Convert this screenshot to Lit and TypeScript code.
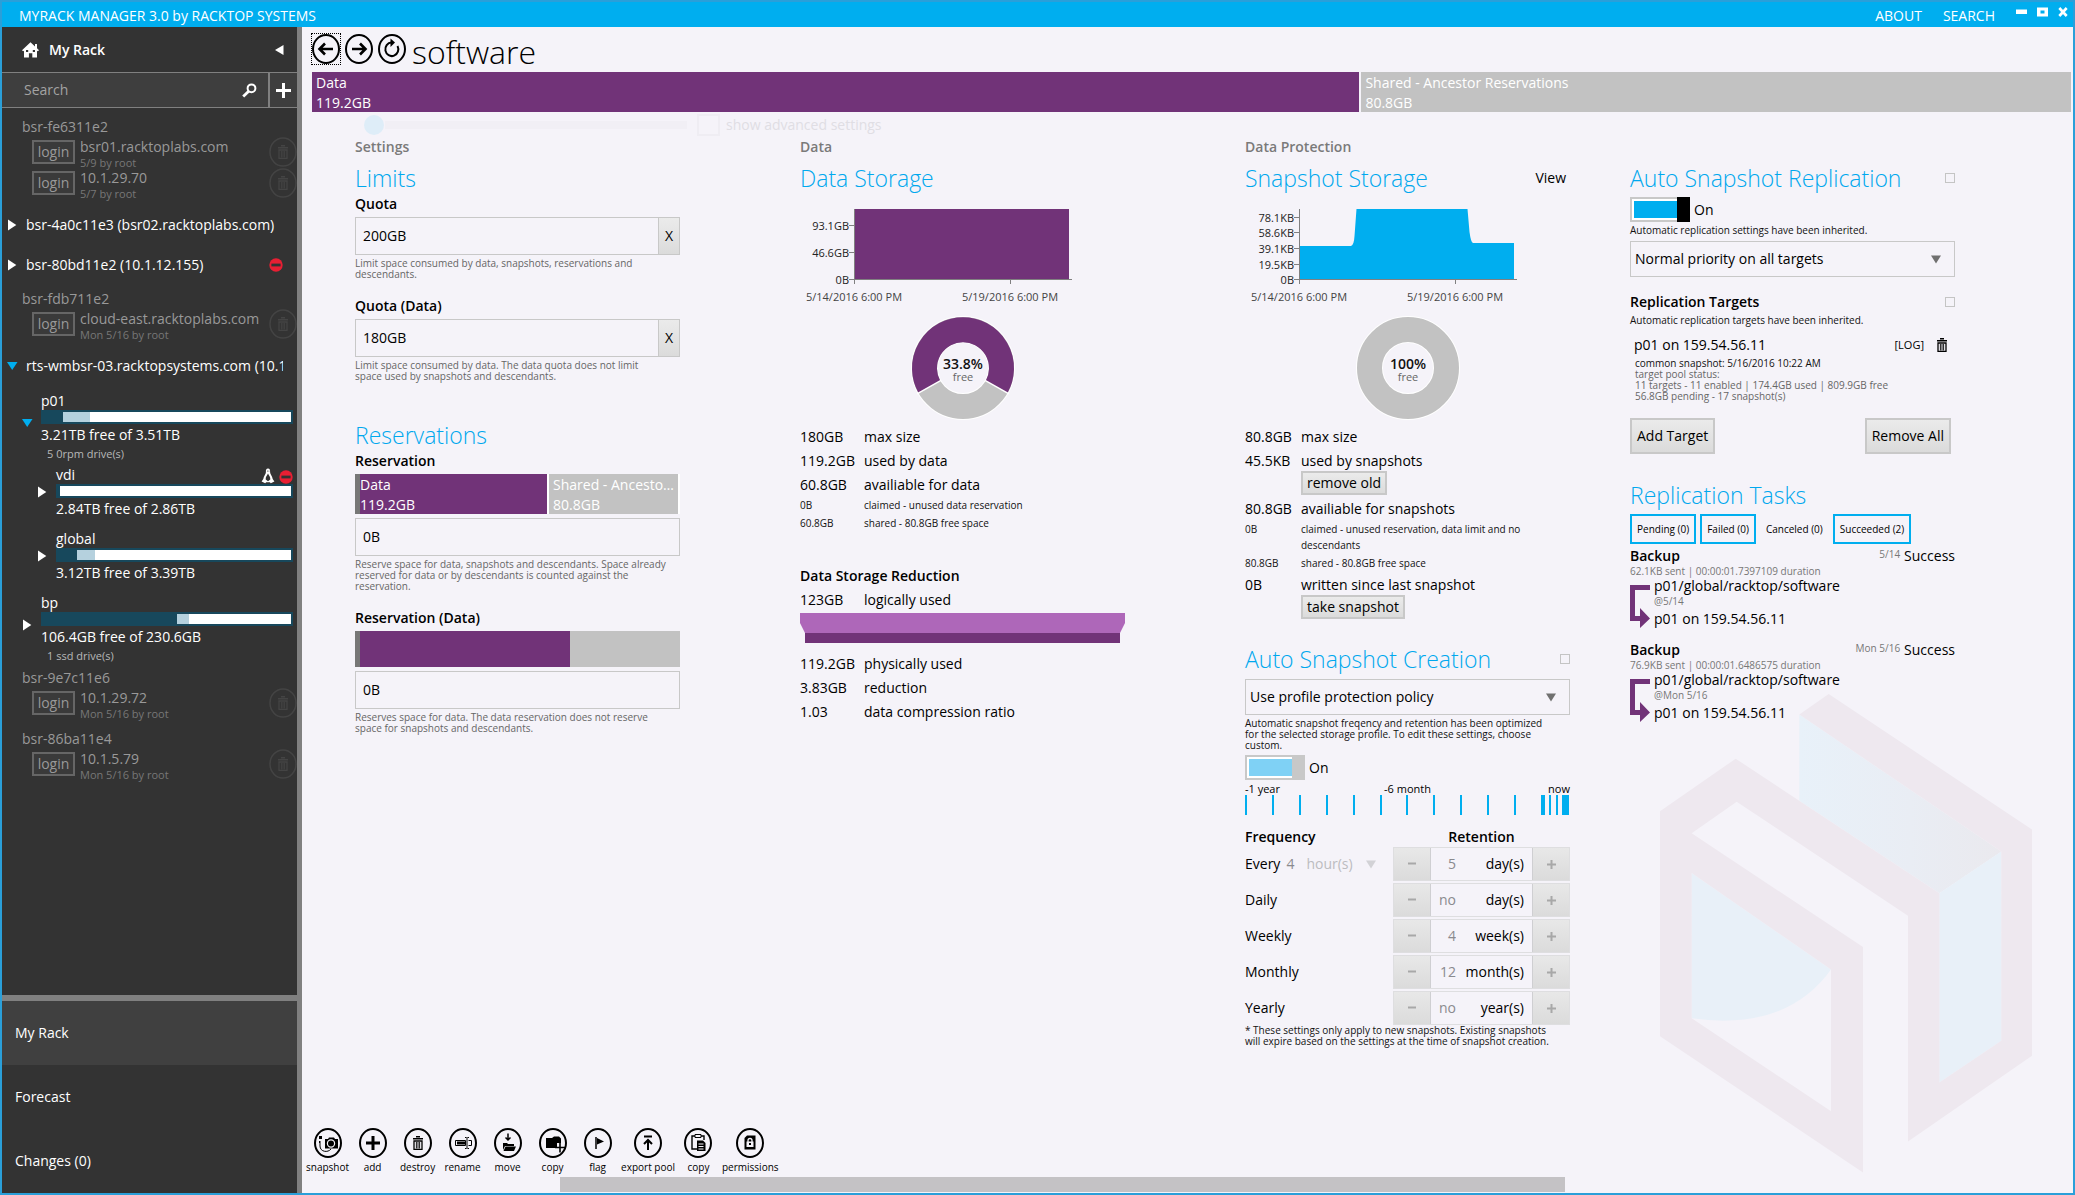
import { LitElement, html, css, svg, nothing } from "lit";
import { customElement, property } from "lit/decorators.js";

const base = css`
  *, *::before, *::after { box-sizing: border-box; }
  h1, h2, h3, p, dl, dd, dt, ul, ol { margin: 0; padding: 0; }
  ul, ol { list-style: none; }
  button, input, select { font: inherit; color: inherit; margin: 0; border-radius: 0; }
  button { cursor: pointer; }
  svg { display: block; flex: none; }
  a { color: inherit; text-decoration: none; }
`;

const trash = svg`
  <path d="M4 0.7h4M1 2.8h10" stroke="currentColor" stroke-width="1.4" fill="none"/>
  <path d="M2 5h8v8.3H2z" fill="none" stroke="currentColor" stroke-width="1.3"/>
  <path d="M4.4 6v6.5M6 6v6.5M7.6 6v6.5" stroke="currentColor" stroke-width="0.9"/>`;

/* ------------------------------------------------------------ sidebar */

interface Login { host: string; when: string; }
interface Volume {
  name: string; used: number; reserved: number; free: string;
  drives?: string; open?: boolean; linux?: boolean; blocked?: boolean; children?: Volume[];
}
interface Host { name: string; logins?: Login[]; open?: boolean; blocked?: boolean; volumes?: Volume[]; }

const HOSTS: Host[] = [
  { name: "bsr-fe6311e2", logins: [
    { host: "bsr01.racktoplabs.com", when: "5/9 by root" },
    { host: "10.1.29.70", when: "5/7 by root" } ] },
  { name: "bsr-4a0c11e3 (bsr02.racktoplabs.com)" },
  { name: "bsr-80bd11e2 (10.1.12.155)", blocked: true },
  { name: "bsr-fdb711e2", logins: [{ host: "cloud-east.racktoplabs.com", when: "Mon 5/16 by root" }] },
  { name: "rts-wmbsr-03.racktopsystems.com (10.1", open: true, volumes: [
    { name: "p01", used: 8, reserved: 11, free: "3.21TB free of 3.51TB", drives: "5 0rpm drive(s)", open: true, children: [
      { name: "vdi", used: 1, reserved: 0, free: "2.84TB free of 2.86TB", linux: true, blocked: true },
      { name: "global", used: 8, reserved: 8, free: "3.12TB free of 3.39TB" } ] },
    { name: "bp", used: 54, reserved: 5, free: "106.4GB free of 230.6GB", drives: "1 ssd drive(s)" } ] },
  { name: "bsr-9e7c11e6", logins: [{ host: "10.1.29.72", when: "Mon 5/16 by root" }] },
  { name: "bsr-86ba11e4", logins: [{ host: "10.1.5.79", when: "Mon 5/16 by root" }] },
];

@customElement("rack-sidebar")
export class RackSidebar extends LitElement {
  static styles = [base, css`
    :host { display: flex; flex-direction: column; background: #333; color: #fff; border-right: 5px solid #808080; min-width: 0; }
    .head { display: flex; align-items: center; height: 45px; padding: 0 13px 0 20px; gap: 10px; font-weight: 600; }
    .head span { flex: 1; }
    .find { display: flex; height: 36px; border: solid #808080; border-width: 1px 0; background: #3e3e3e; }
    .find input { flex: 1; min-width: 0; border: 0; background: none; padding: 0 0 0 22px; outline: none; }
    .find input::placeholder { color: #a3a3a3; opacity: 1; }
    .icon { display: grid; place-items: center; background: none; border: 0; padding: 0; color: #fff; }
    .mag { width: 37px; }
    .plus { width: 29px; border-left: 2px solid #808080; }
    .tree { flex: 1; padding-top: 5px; overflow: hidden; }
    .off { padding: 4px 0 6px 20px; color: #999; }
    .login { display: flex; height: 31px; padding-left: 10px; gap: 5px; }
    .login button.in { width: 43px; height: 24px; margin-top: 3px; padding: 0; border: 2px solid #666; background: #3a3a3a; line-height: 20px; flex: none; }
    .who { flex: 1; min-width: 0; white-space: nowrap; }
    .when { font-size: 11px; line-height: 11px; color: #777; }
    .del { width: 28px; height: 30px; padding: 0; border: 0; background: none; color: #444; flex: none; }
    .on { display: flex; align-items: center; height: 40px; padding: 0 14px 0 5px; }
    .name { flex: 1; min-width: 0; white-space: nowrap; overflow: hidden; }
    .tw { display: grid; place-items: center start; width: 13px; height: 14px; margin-right: 6px; padding: 0; border: 0; background: none; flex: none; }
    .pools { padding: 2px 4px 0 20px; }
    .vol { display: grid; grid-template-columns: 13px 1fr; column-gap: 6px; margin-top: 10px; }
    .vol:first-child { margin-top: 4px; }
    .vol .tw { margin: 24px 0 0; }
    .kids { padding-left: 15px; }
    .kids .tw { margin-top: 19px; }
    .vname { display: flex; align-items: end; gap: 4px; height: 18px; line-height: 18px; }
    .vname span { flex: 1; }
    .bar { display: flex; height: 14px; border: 2px solid #17485c; background: #fff; }
    .used { background: #17485c; }
    .res { background: #b5d1de; }
    .free { line-height: 22px; white-space: nowrap; }
    .drives { font-size: 11px; line-height: 16px; color: #b8b8b8; padding-left: 6px; }
    .tabs { border-top: 6px solid #808080; }
    .tabs a { display: flex; align-items: center; height: 64px; padding-left: 13px; }
    .tabs a.cur { background: #404040; }
  `];

  private twisty(open?: boolean) {
    return html`<button class="tw" aria-label=${open ? "Collapse" : "Expand"}>
      <svg width="11" height="12" viewBox="0 0 11 12">${open
        ? svg`<path d="M0 2h10.5L5.2 10z" fill="#00aeef"/>`
        : svg`<path d="M1 0.5v11L9.300 6z" fill="#fff"/>`}</svg></button>`;
  }

  private stop() {
    return html`<svg width="14" height="14" viewBox="0 0 14 14"><circle cx="7" cy="7" r="6.7" fill="#e81f33"/><path d="M2.400 5.600h9.200v2.800H2.400z" fill="#333"/></svg>`;
  }

  private volume(v: Volume): unknown {
    return html`
      <li class="vol">
        ${this.twisty(v.open)}
        <div>
          <div class="vname"><span>${v.name}</span>
            ${v.linux ? html`<svg width="14" height="16" viewBox="0 0 14 16"><path d="M7 0.6C5.200.6 4.800 2 4.900 4.200 4.900 6 2.700 8 2.300 11l-1.700 2.600 3.600 1.700 1-1.100h3.600l1 1.100 3.600-1.700-1.700-2.600C11.300 8 9.100 6 9.100 4.200 9.200 2 8.800.6 7 .6z" fill="#fff"/><path d="M7 5.400c-.9 2-2.600 3.600-2.300 6L7 13.200l2.300-1.800C9.600 9 7.900 7.400 7 5.400z" fill="#333"/><path d="M6 3.100h.8M7.500 3.100h.8" stroke="#333" stroke-width=".9"/></svg>` : nothing}
            ${v.blocked ? this.stop() : nothing}</div>
          <div class="bar"><div class="used" style="width:${v.used}%"></div><div class="res" style="width:${v.reserved}%"></div></div>
          <div class="free">${v.free}</div>
          ${v.drives ? html`<div class="drives">${v.drives}</div>` : nothing}
        </div>
      </li>
      ${v.children ? html`<li><ul class="kids">${v.children.map((c) => this.volume(c))}</ul></li>` : nothing}`;
  }

  render() {
    return html`
      <div class="head">
        <svg width="17" height="16" viewBox="0 0 17 16"><path d="M8.500.3 13 4.400V2h2v4.200l2 2-1.200 1L15 8.700V15.500h-4.700v-4.300H6.900v4.300H2V8.700l-.9.5L0 8.200z" fill="#fff"/><path d="M4 8h2.200v2H4zM10.800 8H13v2h-2.200z" fill="#333"/></svg>
        <span>My Rack</span>
        <button class="icon" aria-label="Collapse panel"><svg width="9" height="10" viewBox="0 0 9 10"><path d="M8.500 0v10L0 5z" fill="#fff"/></svg></button>
      </div>
      <div class="find">
        <input type="text" placeholder="Search" aria-label="Search">
        <button class="icon mag" aria-label="Find"><svg width="15" height="15" viewBox="0 0 15 15"><circle cx="9.500" cy="5.300" r="3.900" fill="none" stroke="#fff" stroke-width="2"/><path d="M6.700 8.200 1.200 13.500" stroke="#fff" stroke-width="2.800"/></svg></button>
        <button class="icon plus" aria-label="Add server"><svg width="15" height="15" viewBox="0 0 15 15"><path d="M7.500 0v15M0 7.500h15" stroke="#fff" stroke-width="3"/></svg></button>
      </div>
      <div class="tree">
        ${HOSTS.map((h) => h.logins
          ? html`<div class="off">${h.name}${h.logins.map((l) => html`
              <div class="login"><button class="in">login</button>
                <div class="who">${l.host}<div class="when">${l.when}</div></div>
                <button class="del" aria-label="Forget ${l.host}"><svg width="28" height="30" viewBox="0 0 28 30"><ellipse cx="14" cy="15" rx="13" ry="14" fill="none" stroke="currentColor" stroke-width="1.500"/><g transform="translate(8 8)">${trash}</g></svg></button>
              </div>`)}</div>`
          : html`<div class="on">${this.twisty(h.open)}<span class="name">${h.name}</span>${h.blocked ? this.stop() : nothing}</div>
              ${h.volumes ? html`<ul class="pools">${h.volumes.map((v) => this.volume(v))}</ul>` : nothing}`)}
      </div>
      <nav class="tabs"><a class="cur" href="#rack">My Rack</a><a href="#forecast">Forecast</a><a href="#changes">Changes (0)</a></nav>`;
  }
}

/* ------------------------------------------------------------- charts */

@customElement("history-chart")
export class HistoryChart extends LitElement {
  @property({ attribute: false }) ticks: [number, string][] = [];
  @property() shape = "";
  @property() color = "#713378";
  static styles = [base, css`
    :host { display: block; }
    text { font-size: 11px; fill: #222; }
    .x { fill: #444; }
    .axis { stroke: #808080; fill: none; shape-rendering: crispEdges; }
  `];
  render() {
    return html`<svg width="325" height="110" viewBox="0 0 325 110" role="img" aria-label="Usage history">
      <path d=${this.shape} fill=${this.color}/>
      <path class="axis" d="M54.500 9v75M49 79.500h223M210.500 79v5"/>
      ${this.ticks.map(([y, t]) => svg`<path class="axis" d="M49 ${y}.5h5"/><text x="49" y=${y + 5} text-anchor="end">${t}</text>`)}
      <text class="x" x="54" y="101" text-anchor="middle">5/14/2016 6:00 PM</text>
      <text class="x" x="210" y="101" text-anchor="middle">5/19/2016 6:00 PM</text>
    </svg>`;
  }
}

@customElement("free-donut")
export class FreeDonut extends LitElement {
  @property() label = "";
  @property({ type: Boolean }) split = false;
  static styles = [base, css`
    :host { display: flex; justify-content: center; }
    .big { font-size: 14px; font-weight: 600; fill: #111; }
    .sub { font-size: 11px; fill: #666; }
  `];
  render() {
    return html`<svg width="104" height="104" viewBox="0 0 104 104" role="img" aria-label="${this.label} free">
      <circle cx="52" cy="52" r="38.500" fill="none" stroke="#fff" stroke-width="27"/>
      <circle cx="52" cy="52" r="38.500" fill="none" stroke="#c2c2c2" stroke-width="25"/>
      ${this.split ? svg`
        <path d="M18.400 71 A38.500 38.500 0 1 1 85.600 71" fill="none" stroke="#713378" stroke-width="25"/>
        <path d="M30 64.400 6 77.800M74 64.400 98 77.800" stroke="#fff" stroke-width="1.500"/>` : nothing}
      <text class="big" x="52" y="53" text-anchor="middle">${this.label}</text>
      <text class="sub" x="52" y="65" text-anchor="middle">free</text>
    </svg>`;
  }
}

/* -------------------------------------------------------------- panels */

const RETENTION = [
  ["Daily", "no", "day(s)"], ["Weekly", "4", "week(s)"], ["Monthly", "12", "month(s)"], ["Yearly", "no", "year(s)"],
];

const TASKS = [
  { when: "5/14", sent: "62.1KB sent | 00:00:01.7397109 duration", at: "@5/14" },
  { when: "Mon 5/16", sent: "76.9KB sent | 00:00:01.6486575 duration", at: "@Mon 5/16" },
];

@customElement("dataset-panels")
export class DatasetPanels extends LitElement {
  static styles = [base, css`
    :host { display: grid; grid-template-columns: 325fr 325fr 710fr; column-gap: 120px; align-items: start; padding: 0 118px 0 53px; }
    section { min-width: 0; }
    .pair { display: grid; grid-template-columns: 1fr 1fr; column-gap: 60px; align-items: start; }
    .cap { color: #7a7a7a; font-weight: 600; font-size: 14px; line-height: 20px; margin-bottom: 5px; }
    h2 { font-size: 23px; font-weight: 300; line-height: 32px; color: #00a8ee; white-space: nowrap; }
    h3, .lbl { display: block; font-size: 14px; font-weight: 600; line-height: 20px; }
    .row { display: flex; align-items: center; justify-content: space-between; }
    .help { font-size: 10px; line-height: 11px; margin-top: 3px; padding-bottom: 1px; color: #666; }
    .help.dark { color: #111; }
    .gap { margin-top: 15px; }
    .big { margin-top: 36px; }
    .field { display: flex; height: 38px; margin-top: 3px; border: 1px solid #c8c8c8; }
    .field input { flex: 1; min-width: 0; border: 0; background: none; padding: 0 7px; outline: none; }
    .field button { width: 21px; border: 0; border-left: 1px solid #c8c8c8; padding: 0; background: linear-gradient(#ebebeb, #dbdbdb); }
    .after { margin-top: 4px; }
    .split { display: flex; gap: 2px; height: 40px; margin-top: 3px; padding-right: 2px; background: #fff; color: #fff; }
    .seg { min-width: 0; padding: 1px 4px; background: #c2c2c2; white-space: nowrap; overflow: hidden; text-overflow: ellipsis; }
    .seg div { overflow: hidden; text-overflow: ellipsis; line-height: 20px; }
    .data { background: #713378; }
    .handle { border-left: 5px solid #777; padding-left: 0; }
    .plain { height: 36px; gap: 0; padding: 0; }
    .chart { margin-top: 6px; }
    .donut { margin: 6px 0 5px; }
    dl { display: grid; grid-template-columns: 64px 1fr; }
    .snap { grid-template-columns: 56px 1fr; }
    dt, dd { padding: 2px 0; white-space: nowrap; }
    .sm { font-size: 10px; line-height: 16px; padding: 0 0 2px; color: #111; }
    .btn { display: block; height: 24px; padding: 0 4px; border: 2px solid #c8c8c8; background: linear-gradient(#ebebeb, #dbdbdb); line-height: 20px; }
    .tall { height: 36px; line-height: 32px; padding: 0 5px; }
    .reduce { width: 100%; height: 30px; margin: 1px 0 9px; }
    .mid { margin: 33px 0 2px; }
    .create { margin-top: 22px; }
    .link { border: 0; background: none; padding: 0; margin-right: 4px; }
    .tick { appearance: none; width: 10px; height: 10px; border: 1px solid #c4c4c4; background: none; flex: none; }
    .pick { display: grid; align-items: center; height: 36px; margin-top: 4px; border: 1px solid #c8c8c8; }
    .pick > * { grid-area: 1 / 1; }
    .pick select { appearance: none; height: 34px; width: 100%; border: 0; padding: 0 4px; background: none; outline: none; }
    .pick svg { justify-self: end; margin-right: 13px; pointer-events: none; }
    .switch { display: flex; align-items: center; gap: 4px; height: 25px; margin-top: 3px; }
    .switch input { appearance: none; width: 60px; height: 25px;
      background: linear-gradient(#000, #000) right / 13px 100% no-repeat, linear-gradient(#00aeef, #00aeef) 4px 4px / 43px 17px no-repeat,
        linear-gradient(#fff, #fff) 2px 2px / 56px 21px no-repeat, #c8c8c8; }
    .switch input:disabled { background: linear-gradient(#c8c8c8, #c8c8c8) right / 13px 100% no-repeat, linear-gradient(#7fd1f5, #7fd1f5) 4px 4px / 43px 17px no-repeat,
        linear-gradient(#fff, #fff) 2px 2px / 56px 21px no-repeat, #c8c8c8; }
    .scale { display: grid; grid-template-columns: 1fr auto 1fr; font-size: 11px; line-height: 12px; margin-top: 3px; }
    .scale span:last-child { text-align: right; }
    .line { width: 100%; height: 20px; }
    table { width: 100%; margin-top: 12px; border-collapse: collapse; }
    th, td { padding: 0; text-align: left; font-weight: 400; }
    thead th { font-weight: 600; line-height: 20px; }
    thead th + th { width: 177px; text-align: center; }
    tbody th, tbody td { height: 36px; padding-bottom: 2px; }
    tbody tr:last-child > * { height: 34px; padding-bottom: 0; }
    .step { display: grid; grid-template-columns: 36px 1fr 36px; height: 34px; border: 1px solid #dedee0; }
    .step button { border: 0; padding: 0; display: grid; place-items: center; background: linear-gradient(#e8e8e8, #dbdbdb); }
    .amount { display: flex; align-items: center; justify-content: space-between; border: solid #cfcfd2; border-width: 0 1px; padding-right: 8px; }
    .amount input { width: 25px; border: 0; padding: 0; background: none; text-align: right; color: #8a8a8e; }
    .every { display: flex; align-items: center; }
    .every input { width: 20px; border: 0; padding: 0; margin: 0 0 0 6px; background: none; color: #8a8a8e; text-align: left; }
    .every select { appearance: none; border: 0; padding: 0; background: none; color: #bcbcc0; opacity: 1; width: 60px; }
    .notes { margin: 0; }
    .target { display: grid; grid-template-columns: 1fr auto 12px; align-items: center; column-gap: 12px; padding: 8px 7px 0 4px; }
    .log { font-size: 11px; }
    .bin { border: 0; padding: 0; background: none; width: 12px; }
    .status { padding-left: 5px; }
    .status b { font-weight: 400; color: #111; }
    .acts { padding-right: 4px; margin-top: 15px; }
    .tasks { margin-top: 25px; }
    .filters { display: flex; gap: 4px; margin-top: 3px; margin-bottom: 2px; }
    .filters button { height: 30px; padding: 0 5px; border: 2px solid #00aeef; background: none; font-size: 10px; white-space: nowrap; }
    .filters .idle { border-color: transparent; padding: 0 4px; }
    .task { margin-bottom: 11px; }
    .task .row { gap: 4px; }
    .task .row h3 { flex: 1; }
    .task small { font-size: 10px; color: #777; line-height: 16px; align-self: start; }
    .task .help { margin: 0; padding: 0; color: #777; line-height: 10px; }
    .route { display: grid; grid-template-columns: 20px 1fr; column-gap: 4px; }
    .route svg { margin-top: 9px; }
    .last { margin-top: 3px; }
  `];

  private arrow(color = "#707070") {
    return html`<svg width="10" height="9" viewBox="0 0 10 9"><path d="M0 0.500h10L5 8.500z" fill=${color}/></svg>`;
  }

  private stepper(name: string, value: string, unit: string) {
    return html`<div class="step">
      <button aria-label="Less, ${name}"><svg width="8" height="8" viewBox="0 0 8 8"><path d="M0 3.500h8" stroke="#a8a8a8" stroke-width="2"/></svg></button>
      <div class="amount"><input type="text" .value=${value} aria-label="${name} retention" disabled><span>${unit}</span></div>
      <button aria-label="More, ${name}"><svg width="9" height="9" viewBox="0 0 9 9"><path d="M0 4.500h9M4.500 0v9" stroke="#a8a8a8" stroke-width="2"/></svg></button>
    </div>`;
  }

  private settings() {
    return html`<section>
      <div class="cap">Settings</div>
      <h2>Limits</h2>
      <label class="lbl" for="quota">Quota</label>
      <div class="field"><input id="quota" type="text" value="200GB"><button aria-label="Clear quota">X</button></div>
      <p class="help">Limit space consumed by data, snapshots, reservations and<br>descendants.</p>
      <label class="lbl gap" for="dquota">Quota (Data)</label>
      <div class="field"><input id="dquota" type="text" value="180GB"><button aria-label="Clear data quota">X</button></div>
      <p class="help">Limit space consumed by data. The data quota does not limit<br>space used by snapshots and descendants.</p>
      <h2 class="big">Reservations</h2>
      <label class="lbl" for="res">Reservation</label>
      <div class="split">
        <div class="seg data handle" style="flex:60.2 1 0"><div>Data</div><div>119.2GB</div></div>
        <div class="seg" style="flex:39.8 1 0"><div>Shared - Ancestor Reservations</div><div>80.8GB</div></div>
      </div>
      <div class="field after"><input id="res" type="text" value="0B"></div>
      <p class="help">Reserve space for data, snapshots and descendants. Space already<br>reserved for data or by descendants is counted against the<br>reservation.</p>
      <label class="lbl gap" for="dres">Reservation (Data)</label>
      <div class="split plain">
        <div class="seg data handle" style="flex:66.9 1 0"></div><div class="seg" style="flex:33.1 1 0"></div>
      </div>
      <div class="field after"><input id="dres" type="text" value="0B"></div>
      <p class="help">Reserves space for data. The data reservation does not reserve<br>space for snapshots and descendants.</p>
    </section>`;
  }

  private data() {
    return html`<section>
      <div class="cap">Data</div>
      <h2>Data Storage</h2>
      <history-chart class="chart" shape="M55 9h214v70H55z" .ticks=${[[25, "93.1GB"], [52, "46.6GB"], [79, "0B"]]}></history-chart>
      <free-donut class="donut" label="33.8%" split></free-donut>
      <dl>
        <dt>180GB</dt><dd>max size</dd>
        <dt>119.2GB</dt><dd>used by data</dd>
        <dt>60.8GB</dt><dd>availiable for data</dd>
        <dt class="sm">0B</dt><dd class="sm">claimed - unused data reservation</dd>
        <dt class="sm">60.8GB</dt><dd class="sm">shared - 80.8GB free space</dd>
      </dl>
      <h3 class="mid">Data Storage Reduction</h3>
      <dl><dt>123GB</dt><dd>logically used</dd></dl>
      <svg class="reduce" viewBox="0 0 325 30" preserveAspectRatio="none"><path d="M0 0h325v10l-5 10H5L0 10z" fill="#ae67b9"/><path d="M5 20h315v10H5z" fill="#713378"/></svg>
      <dl>
        <dt>119.2GB</dt><dd>physically used</dd>
        <dt>3.83GB</dt><dd>reduction</dd>
        <dt>1.03</dt><dd>data compression ratio</dd>
      </dl>
    </section>`;
  }

  private protection() {
    const marks = [0, 27, 54, 81, 108, 135, 161, 188, 215, 242, 269];
    return html`<section>
      <div class="row"><h2>Snapshot Storage</h2><button class="link">View</button></div>
      <history-chart class="chart" color="#00aeef"
        shape="M55 46H106Q109 45 109.500 36L111.500 9H222.500L224.500 32Q226 43 228 43H269V79H55z"
        .ticks=${[[17, "78.1KB"], [32, "58.6KB"], [48, "39.1KB"], [64, "19.5KB"], [79, "0B"]]}></history-chart>
      <free-donut class="donut" label="100%"></free-donut>
      <dl class="snap">
        <dt>80.8GB</dt><dd>max size</dd>
        <dt>45.5KB</dt><dd>used by snapshots<button class="btn">remove old</button></dd>
        <dt>80.8GB</dt><dd>availiable for snapshots</dd>
        <dt class="sm">0B</dt><dd class="sm">claimed - unused reservation, data limit and no<br>descendants</dd>
        <dt class="sm">80.8GB</dt><dd class="sm">shared - 80.8GB free space</dd>
        <dt>0B</dt><dd>written since last snapshot<button class="btn">take snapshot</button></dd>
      </dl>
      <div class="row create"><h2>Auto Snapshot Creation</h2><input class="tick" type="checkbox" aria-label="Override snapshot creation"></div>
      <div class="pick"><select aria-label="Protection policy"><option>Use profile protection policy</option></select>${this.arrow()}</div>
      <p class="help dark">Automatic snapshot freqency and retention has been optimized<br>for the selected storage profile. To edit these settings, choose<br>custom.</p>
      <label class="switch"><input type="checkbox" checked disabled>On</label>
      <div class="scale"><span>-1 year</span><span>-6 month</span><span>now</span></div>
      <svg class="line" viewBox="0 0 325 20" preserveAspectRatio="none" fill="#00aeef">
        ${marks.map((x) => svg`<rect x=${x} width="2" height="20"/>`)}
        <rect x="296" width="4" height="20"/><rect x="304" width="2" height="20"/><rect x="311" width="2" height="20"/><rect x="317" width="7" height="20"/>
      </svg>
      <table>
        <thead><tr><th>Frequency</th><th>Retention</th></tr></thead>
        <tbody>
          <tr><th><div class="every">Every<input type="text" value="4" aria-label="Interval" disabled><select aria-label="Interval unit" disabled><option>hour(s)</option></select>${this.arrow("#d2d2d6")}</div></th><td>${this.stepper("Hourly", "5", "day(s)")}</td></tr>
          ${RETENTION.map(([n, v, u]) => html`<tr><th>${n}</th><td>${this.stepper(n, v, u)}</td></tr>`)}
        </tbody>
      </table>
      <p class="help dark notes">* These settings only apply to new snapshots. Existing snapshots<br>will expire based on the settings at the time of snapshot creation.</p>
    </section>`;
  }

  private replication() {
    return html`<section>
      <div class="row"><h2>Auto Snapshot Replication</h2><input class="tick" type="checkbox" aria-label="Override replication"></div>
      <label class="switch"><input type="checkbox" checked>On</label>
      <p class="help dark">Automatic replication settings have been inherited.</p>
      <div class="pick"><select aria-label="Replication priority"><option>Normal priority on all targets</option></select>${this.arrow()}</div>
      <div class="row gap"><h3>Replication Targets</h3><input class="tick" type="checkbox" aria-label="Override targets"></div>
      <p class="help dark">Automatic replication targets have been inherited.</p>
      <div class="target"><span>p01 on 159.54.56.11</span><a class="log" href="#log">[LOG]</a><button class="bin" aria-label="Remove target"><svg width="12" height="14" viewBox="0 0 12 14">${trash}</svg></button></div>
      <p class="help status"><b>common snapshot: 5/16/2016 10:22 AM</b><br>target pool status:<br>11 targets - 11 enabled | 174.4GB used | 809.9GB free<br>56.8GB pending - 17 snapshot(s)</p>
      <div class="row acts"><button class="btn tall">Add Target</button><button class="btn tall">Remove All</button></div>
      <h2 class="tasks">Replication Tasks</h2>
      <div class="filters"><button>Pending (0)</button><button>Failed (0)</button><button class="idle">Canceled (0)</button><button>Succeeded (2)</button></div>
      ${TASKS.map((t) => html`<article class="task">
        <div class="row"><h3>Backup</h3><small>${t.when}</small><span>Success</span></div>
        <p class="help">${t.sent}</p>
        <div class="route">
          <svg width="20" height="43" viewBox="0 0 20 43"><path d="M20 0v5H5v26h5v-8l10 10.500L10 43v-7H0V0z" fill="#713378"/></svg>
          <div><div>p01/global/racktop/software</div><p class="help">${t.at}</p><div class="last">p01 on 159.54.56.11</div></div>
        </div>
      </article>`)}
    </section>`;
  }

  render() {
    return html`${this.settings()}${this.data()}
      <div><div class="cap">Data Protection</div><div class="pair">${this.protection()}${this.replication()}</div></div>`;
  }
}

/* ------------------------------------------------------------- toolbar */

const ACTIONS: [string, unknown][] = [
  ["snapshot", svg`<path d="M11 11h3l1-1.500h5L21 11h3v9.500H11z"/><circle cx="17" cy="15.500" r="3.600" fill="none" stroke="#f5f3f9" stroke-width="1.200"/><path d="M5 8h3v3H5zM5 13h1.500v2H5z"/><path d="M6 15v3c0 6 8 7 11 3" fill="none" stroke="#000"/>`],
  ["add", svg`<path d="M14 8v14M7 15h14" stroke="#000" stroke-width="3"/>`],
  ["destroy", svg`<g transform="translate(8 8)">${trash}</g>`],
  ["rename", svg`<path d="M6.500 12.500h10v5h-10z" fill="none" stroke="#000"/><path d="M8 13.500h8v3H8z"/><path d="M19.500 12.500h3v5h-3M18 9.500v11M16 9.500h1.500M18.500 9.500H20M16 20.500h1.500M18.500 20.500H20" fill="none" stroke="#000"/>`],
  ["move", svg`<path d="M14 5.500v6M11.500 9.500 14 12l2.500-2.500" fill="none" stroke="#000" stroke-width="1.500"/><path d="M9 15h4l1 1h6v2H11l-2 4z"/><path d="M11.500 18.500H22L20 23H9.500z"/>`],
  ["copy", svg`<path d="M7 10h6l2-1.500h5l2 2V15h-4v5H7z"/><path d="M21 14.500v10M16 19.500h10" stroke="#000" stroke-width="1.600"/>`],
  ["flag", svg`<path d="M12 9v12" stroke="#000" stroke-width="1.500"/><path d="M13 10l7 3.500-7 3z"/>`],
  ["export pool", svg`<path d="M10 8.500h8M14 22v-9M10 16l4-4 4 4" fill="none" stroke="#000" stroke-width="2"/>`],
  ["copy", svg`<path d="M11 8H8v13h5M17 8h3v4" fill="none" stroke="#000" stroke-width="1.400"/><path d="M11 6.500h6v3h-6z" fill="none" stroke="#000"/><path d="M13 12.500h6l2.500 2.500v8H13z"/><path d="M14.500 16h5M14.500 18.500h5M14.500 21h5" stroke="#f5f3f9"/>`],
  ["permissions", svg`<path d="M8.500 10l2.500-2.500h8.500v14h-11z"/><path d="M10.500 13.500h7V19h-7z" fill="#f5f3f9"/><path d="M12 14v-1.500a2 2 0 0 1 4 0V14" fill="none" stroke="#f5f3f9" stroke-width="1.300"/><path d="M13 15h2v2h-2z"/>`],
];

@customElement("app-root")
export class AppRoot extends LitElement {
  static styles = [base, css`
    :host { display: flex; flex-direction: column; min-height: 100vh; box-sizing: border-box; border: 2px solid #2a9fd9; background: #f5f3f9; color: #000;
      font-family: "Open Sans", "Noto Sans", sans-serif; font-size: 14px; line-height: 20px; }
    *, *::before, *::after { box-sizing: border-box; }
    header { display: flex; align-items: center; height: 25px; padding: 2px 5px 0 17px; background: #00aeef; color: #fff; }
    header h1 { flex: 1; font-size: 14px; font-weight: 400; line-height: 20px; }
    header a { margin-right: 21px; }
    .win { display: flex; gap: 10px; align-self: start; margin-top: 3px; }
    .win button { border: 0; padding: 0; background: none; }
    .body { flex: 1; display: grid; grid-template-columns: 300px minmax(0, 1fr); }
    main { position: relative; display: flex; flex-direction: column; min-width: 0; }
    .logo { position: absolute; right: 41px; bottom: 20px; width: 372px; height: 479px; }
    .top { display: flex; height: 45px; padding: 7px 0 0 10px; gap: 5px; }
    .top button { width: 28px; height: 30px; padding: 0; border: 0; background: none; }
    .top button.focus { outline: 1px dotted #000; outline-offset: 0; }
    .top h2 { font-size: 32px; line-height: 36px; font-weight: 300; margin-left: 1px; }
    .usage { display: flex; gap: 2px; height: 40px; margin: 0 2px 0 10px; color: #fff; }
    .usage div { padding: 1px 4px; background: #c2c2c2; }
    .usage p { line-height: 20px; }
    .usage .data { background: #713378; }
    .adv { display: flex; align-items: center; height: 25px; padding-left: 62px; color: #e0dee4; }
    .adv input[type=range] { appearance: none; width: 323px; height: 20px; background: none; margin: 0 10px 0 0; }
    .adv input[type=range]::-webkit-slider-runnable-track { height: 8px; background: linear-gradient(#f1eff5, #f1eff5) 21px 0 no-repeat; }
    .adv input[type=range]::-webkit-slider-thumb { appearance: none; width: 20px; height: 20px; margin-top: -6px; border-radius: 50%; background: #deedf8; }
    .adv label { display: flex; align-items: center; gap: 6px; }
    .adv input[type=checkbox] { appearance: none; width: 23px; height: 22px; border: 2px solid #efedf3; margin: 0; }
    dataset-panels { flex: 1; position: relative; }
    .bar { display: flex; position: relative; padding: 1px 3px 0; height: 50px; }
    .bar button { display: flex; flex-direction: column; align-items: center; min-width: 45px; padding: 0 1px; border: 0; background: none; font-size: 10px; line-height: 18px; white-space: nowrap; }
    .scroll { height: 15px; margin: 0 508px 1px 258px; background: #c4c2c5; position: relative; }
  `];

  private ring(inner: unknown) {
    return html`<svg width="28" height="30" viewBox="0 0 28 30"><ellipse cx="14" cy="15" rx="13" ry="14" fill="none" stroke="#000" stroke-width="2"/>${inner}</svg>`;
  }

  render() {
    return html`
      <header>
        <h1>MYRACK MANAGER 3.0 by RACKTOP SYSTEMS</h1>
        <a href="#about">ABOUT</a><a href="#search">SEARCH</a>
        <div class="win">
          <button aria-label="Minimize"><svg width="11" height="10" viewBox="0 0 11 10"><path d="M0 2.500h11v4.500H0z" fill="#fff"/></svg></button>
          <button aria-label="Maximize"><svg width="11" height="10" viewBox="0 0 11 10"><path d="M0 .5h11v9H0zM3.500 3.500v3h4v-3z" fill="#fff" fill-rule="evenodd"/></svg></button>
          <button aria-label="Close"><svg width="10" height="10" viewBox="0 0 10 10"><path d="M1.300 1l7.400 8M8.700 1 1.300 9" stroke="#fff" stroke-width="2.600"/></svg></button>
        </div>
      </header>
      <div class="body">
        <rack-sidebar></rack-sidebar>
        <main>
          <svg class="logo" viewBox="180 500 1116 1022" preserveAspectRatio="none" aria-hidden="true">
            <defs><linearGradient id="g"><stop offset="0" stop-color="#e8f1f9"/><stop offset=".55" stop-color="#e9edf4"/><stop offset="1" stop-color="#eae9ee"/></linearGradient></defs>
            <path d="M598 544 1204 836 1018 925 598 728z" fill="url(#g)"/>
            <path d="M275 882 693 1088Q560 1220 275 1192z" fill="#e8f0f8"/>
            <path d="M1018 925 1204 836V1240L1018 1329z" fill="#e8f0f8"/>
            <path d="M180 750 407 638 1018 925V1329L1204 1240V836L598 544 686 500 1296 789V1272L924 1455V973L410 730 275 797 789 1040V1521L180 1230zM275 882V1192L693 1390V1088z" fill="#eee8ef" fill-rule="evenodd"/>
          </svg>
          <div class="top">
            <button class="focus" aria-label="Back">${this.ring(svg`<path d="M21 15H8M13 9.500 7.500 15l5.500 5.500" fill="none" stroke="#000" stroke-width="2.600"/>`)}</button>
            <button aria-label="Forward">${this.ring(svg`<path d="M7 15h13M15 9.500l5.500 5.500-5.500 5.500" fill="none" stroke="#000" stroke-width="2.600"/>`)}</button>
            <button aria-label="Refresh">${this.ring(svg`<path d="M19.500 12a6.500 6.800 0 1 1-6-3.500" fill="none" stroke="#000" stroke-width="2"/><path d="M12.500 4.500 17 8.500l-4.500 4.500z"/>`)}</button>
            <h2>software</h2>
          </div>
          <div class="usage">
            <div class="data" style="flex:59.7 1 0"><p>Data</p><p>119.2GB</p></div>
            <div style="flex:40.3 1 0"><p>Shared - Ancestor Reservations</p><p>80.8GB</p></div>
          </div>
          <div class="adv">
            <input type="range" min="0" max="10" value="0" aria-label="Detail level">
            <label><input type="checkbox">show advanced settings</label>
          </div>
          <dataset-panels></dataset-panels>
          <div class="bar">${ACTIONS.map(([n, i]) => html`<button>${this.ring(i)}${n}</button>`)}</div>
          <div class="scroll"></div>
        </main>
      </div>`;
  }
}
